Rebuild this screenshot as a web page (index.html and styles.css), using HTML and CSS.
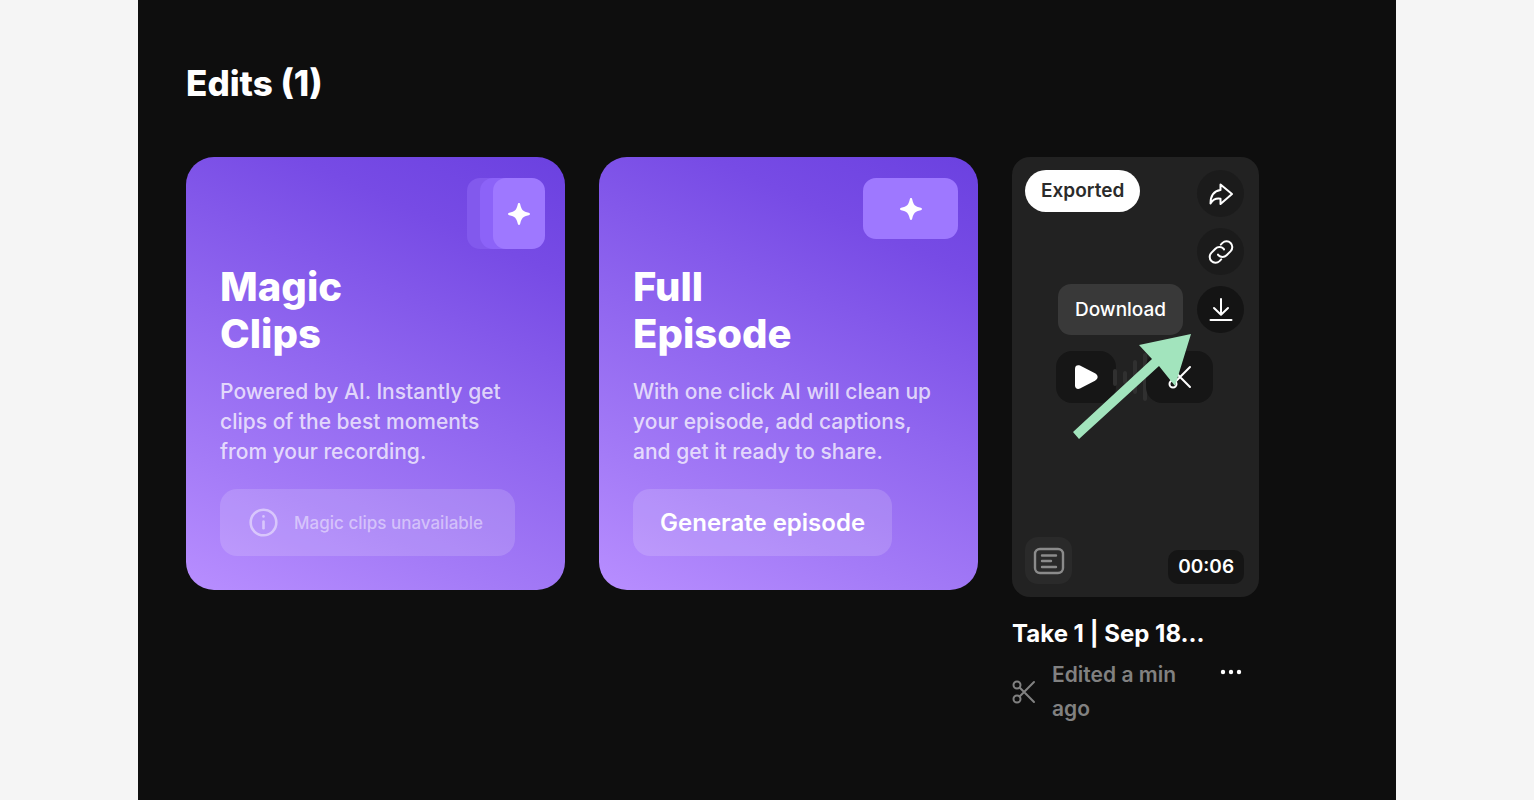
FILE: index.html
```html
<!DOCTYPE html>
<html lang="en">
<head>
<meta charset="utf-8">
<meta name="viewport" content="width=device-width, initial-scale=1">
<title>Edits</title>
<link rel="stylesheet" href="styles.css">
</head>
<body>
<main class="panel">
  <h1 class="heading">Edits (1)</h1>
  <div class="cards">
    <section class="promo">
      <div class="stack" aria-hidden="true">
        <span class="sheet sheet-back"></span>
        <span class="sheet sheet-mid"></span>
        <span class="sheet sheet-front">
          <svg class="spark" viewBox="0 0 24 24"><path d="M12 1c.7 0 1 .5 1.200 1.200C14.500 8 16 9.500 21.800 10.800c1.600.4 1.600 2 0 2.400C16 14.500 14.500 16 13.200 21.800c-.4 1.600-2 1.600-2.400 0C9.500 16 8 14.500 2.200 13.200c-1.600-.4-1.600-2 0-2.400C8 9.500 9.500 8 10.800 2.200 11 1.500 11.300 1 12 1z"/></svg>
        </span>
      </div>
      <h2 class="promo-title">Magic<br>Clips</h2>
      <p class="promo-text">Powered by AI. Instantly get<br>clips of the best moments<br>from your recording.</p>
      <button class="action action-off" type="button" disabled>
        <svg class="info" viewBox="0 0 30 30"><circle cx="15" cy="15" r="12.400"/><path d="M15 14v6.500"/><path d="M15 9v.2"/></svg>
        Magic clips unavailable
      </button>
    </section>

    <section class="promo">
      <div class="stack" aria-hidden="true">
        <span class="sheet sheet-wide">
          <svg class="spark" viewBox="0 0 24 24"><path d="M12 1c.7 0 1 .5 1.200 1.200C14.500 8 16 9.500 21.800 10.800c1.600.4 1.600 2 0 2.400C16 14.500 14.500 16 13.200 21.800c-.4 1.600-2 1.600-2.400 0C9.500 16 8 14.500 2.200 13.200c-1.600-.4-1.600-2 0-2.400C8 9.500 9.500 8 10.800 2.200 11 1.500 11.300 1 12 1z"/></svg>
        </span>
      </div>
      <h2 class="promo-title">Full<br>Episode</h2>
      <p class="promo-text">With one click AI will clean up<br>your episode, add captions,<br>and get it ready to share.</p>
      <button class="action" type="button">Generate episode</button>
    </section>

    <article class="take">
      <div class="thumb">
        <div class="thumb-top">
          <span class="tag">Exported</span>
          <div class="tools">
            <button class="round" type="button" aria-label="Share">
              <svg class="icon" viewBox="0 0 28 28"><path d="M13.500 4.500 L25 14 L13.500 24 V18.800 C9 18 6 19.500 3.500 23.500 C3.500 16 7 11 13.500 10 Z"/></svg>
            </button>
            <button class="round" type="button" aria-label="Copy link">
              <svg class="icon" viewBox="0 0 28 28"><path d="M13.800 6.600 L15.500 4.900 a5.800 5.800 0 0 1 8.200 8.200 L19.600 17.200 a5.800 5.800 0 0 1-8.200 0 L11 16.600"/><path d="M14.200 21.400 L12.500 23.100 a5.800 5.800 0 0 1-8.200-8.200 L8.400 10.800 a5.800 5.800 0 0 1 8.200 0 L17 11.400"/></svg>
            </button>
            <div class="download">
              <span class="tip" id="tip" role="tooltip">Download</span>
              <button class="round round-on" type="button" aria-label="Download" aria-describedby="tip">
                <svg class="icon" viewBox="0 0 28 28"><path d="M14 3V18.500M7 12L14 18.800L21 12M3.500 24H24.500"/></svg>
              </button>
            </div>
          </div>
        </div>
        <div class="controls">
          <button class="control control-play" type="button" aria-label="Play">
            <svg class="icon play" viewBox="0 0 28 28"><path d="M3 5.500 C3 2.500 5.500 1.500 8 2.500 L23 10.300 C26.500 12.200 26.500 15.800 23 17.700 L8 25.500 C5.500 26.500 3 25.500 3 22.500 Z"/></svg>
          </button>
          <svg class="wave" viewBox="0 0 30 52" aria-hidden="true"><path d="M-1 20V33M9 22V31M19 11V41M29 4V48"/></svg>
          <button class="control control-cut" type="button" aria-label="Edit">
            <svg class="scissors" viewBox="0 0 24 24"><circle cx="5" cy="5" r="3.500"/><circle cx="5" cy="19" r="3.500"/><path d="M7.600 7.500L22 22M7.600 16.500L22 2"/></svg>
          </button>
        </div>
        <div class="thumb-bottom">
          <button class="notes" type="button" aria-label="Transcript">
            <svg class="notes-icon" viewBox="0 0 32 28"><rect x="2" y="2" width="28" height="24" rx="5"/><path d="M9 8.500H23M9 14H18M9 20H23"/></svg>
          </button>
          <span class="time">00:06</span>
        </div>
        <svg class="pointer" viewBox="0 0 120 106" aria-hidden="true"><path d="M119 0L103 52L87 32L7 105L1 98L80 25L67 11Z"/></svg>
      </div>
      <h3 class="take-title">Take 1 | Sep 18...</h3>
      <div class="meta">
        <svg class="scissors" viewBox="0 0 24 24" aria-hidden="true"><circle cx="5" cy="5" r="3.500"/><circle cx="5" cy="19" r="3.500"/><path d="M7.600 7.500L22 22M7.600 16.500L22 2"/></svg>
        <span class="edited">Edited a min ago</span>
        <button class="more" type="button" aria-label="More options">
          <svg class="dots" viewBox="0 0 22 6"><circle cx="3" cy="3" r="2.200"/><circle cx="11" cy="3" r="2.200"/><circle cx="19" cy="3" r="2.200"/></svg>
        </button>
      </div>
    </article>
  </div>
</main>
</body>
</html>
```
FILE: styles.css
```css
* { box-sizing: border-box; }
body {
  margin: 0;
  background: #f5f5f5;
  color: #fff;
  font-family: Inter, "Liberation Sans", sans-serif;
}
button {
  margin: 0;
  padding: 0;
  border: 0;
  background: none;
  color: inherit;
  font: inherit;
}
h1, h2, h3, p { margin: 0; }
svg {
  display: block;
  flex: none;
  fill: none;
  stroke: currentColor;
  stroke-width: 2;
  stroke-linecap: round;
  stroke-linejoin: round;
}
.panel {
  min-height: 100vh;
  margin: 0 9%;
  padding: 61px 48px;
  background: #0e0e0e;
}
.heading {
  font-size: 35px;
  line-height: 44px;
  font-weight: 800;
}
.cards {
  display: flex;
  align-items: flex-start;
  gap: 34px;
  margin-top: 52px;
}
.promo {
  display: flex;
  flex: 0 1 379px;
  flex-direction: column;
  align-items: flex-start;
  padding: 21px 20px 34px 34px;
  border-radius: 28px;
  background: linear-gradient(204deg, #6b41e0 0%, #774be5 20%, #8f65ef 50%, #a47bf7 77%, #b88eff 100%);
}
.stack {
  display: flex;
  align-self: flex-end;
  height: 85px;
}
.sheet {
  display: flex;
  align-items: center;
  justify-content: center;
  width: 52px;
  height: 71px;
  border-radius: 13px;
}
.sheet-back { margin-right: -39px; background: #8259ed; }
.sheet-mid { margin-right: -39px; background: #8c63f8; }
.sheet-front { background: #9e78ff; }
.sheet-wide { width: 95px; height: 61px; background: #9e78ff; }
.spark {
  width: 24px;
  height: 24px;
  fill: #fff;
  stroke: none;
}
.promo-title {
  font-size: 40px;
  line-height: 47px;
  font-weight: 800;
}
.promo-text {
  margin-top: 20px;
  color: rgba(255, 255, 255, .74);
  font-size: 21px;
  line-height: 30px;
  font-weight: 500;
  white-space: nowrap;
}
.action {
  display: flex;
  align-items: center;
  gap: 15px;
  height: 67px;
  margin-top: 22px;
  padding: 0 27px;
  border-radius: 17px;
  background: rgba(255, 255, 255, .15);
  font-size: 24px;
  font-weight: 600;
}
.action-off {
  padding: 0 32px 0 28px;
  color: rgba(255, 255, 255, .48);
  font-size: 17px;
  font-weight: 500;
}
.info { width: 31px; height: 31px; stroke-width: 2.500; }
.take { flex: 0 0 247px; }
.thumb {
  position: relative;
  display: flex;
  flex-direction: column;
  min-height: 440px;
  padding: 13px 15px 13px 13px;
  border-radius: 18px;
  background: #222;
}
.thumb-top {
  display: flex;
  align-items: flex-start;
  justify-content: space-between;
}
.tag {
  padding: 0 16px;
  border-radius: 21px;
  background: #fff;
  color: #2b2b2b;
  font-size: 19px;
  line-height: 42px;
  font-weight: 600;
}
.tools {
  display: flex;
  flex-direction: column;
  gap: 11px;
}
.round {
  display: grid;
  place-items: center;
  width: 47px;
  height: 47px;
  border-radius: 50%;
  background: #1b1b1b;
}
.round-on { background: #141414; }
.icon { width: 28px; height: 28px; }
.download { position: relative; }
.tip {
  position: absolute;
  right: 61px;
  top: -2px;
  padding: 0 17px;
  border-radius: 13px;
  background: #393939;
  font-size: 19px;
  line-height: 51px;
  font-weight: 500;
}
.controls {
  display: flex;
  margin: 18px 31px 0;
}
.control {
  display: grid;
  place-items: center;
  height: 52px;
  border-radius: 16px;
  background: #161616;
}
.control-play { width: 60px; }
.control-cut { width: 67px; }
.play { fill: #fff; stroke: none; }
.wave {
  width: 30px;
  height: 52px;
  overflow: visible;
  color: #303030;
  stroke-width: 4;
}
.scissors { width: 24px; height: 24px; }
.thumb-bottom {
  display: flex;
  align-items: flex-end;
  justify-content: space-between;
  margin-top: auto;
}
.notes {
  display: grid;
  place-items: center;
  width: 47px;
  height: 47px;
  border-radius: 13px;
  background: #2a2a2a;
  color: #8b8b8b;
}
.notes-icon { width: 32px; height: 28px; stroke-width: 2.400; }
.time {
  padding: 0 10px;
  border-radius: 10px;
  background: #151515;
  font-size: 19px;
  line-height: 34px;
  font-weight: 600;
}
.pointer {
  position: absolute;
  left: 60px;
  top: 177px;
  width: 120px;
  height: 106px;
  fill: #a2e4bd;
  stroke: none;
}
.take-title {
  margin-top: 22px;
  font-size: 24px;
  line-height: 30px;
  font-weight: 700;
  white-space: nowrap;
}
.meta {
  display: flex;
  align-items: center;
  gap: 16px;
  margin-top: 9px;
  color: #818181;
}
.edited {
  flex: 1;
  font-size: 21px;
  line-height: 34px;
  font-weight: 600;
}
.more {
  display: grid;
  place-items: center;
  align-self: flex-start;
  width: 56px;
  height: 28px;
  color: #fff;
}
.dots {
  width: 22px;
  height: 6px;
  fill: currentColor;
  stroke: none;
}
```
